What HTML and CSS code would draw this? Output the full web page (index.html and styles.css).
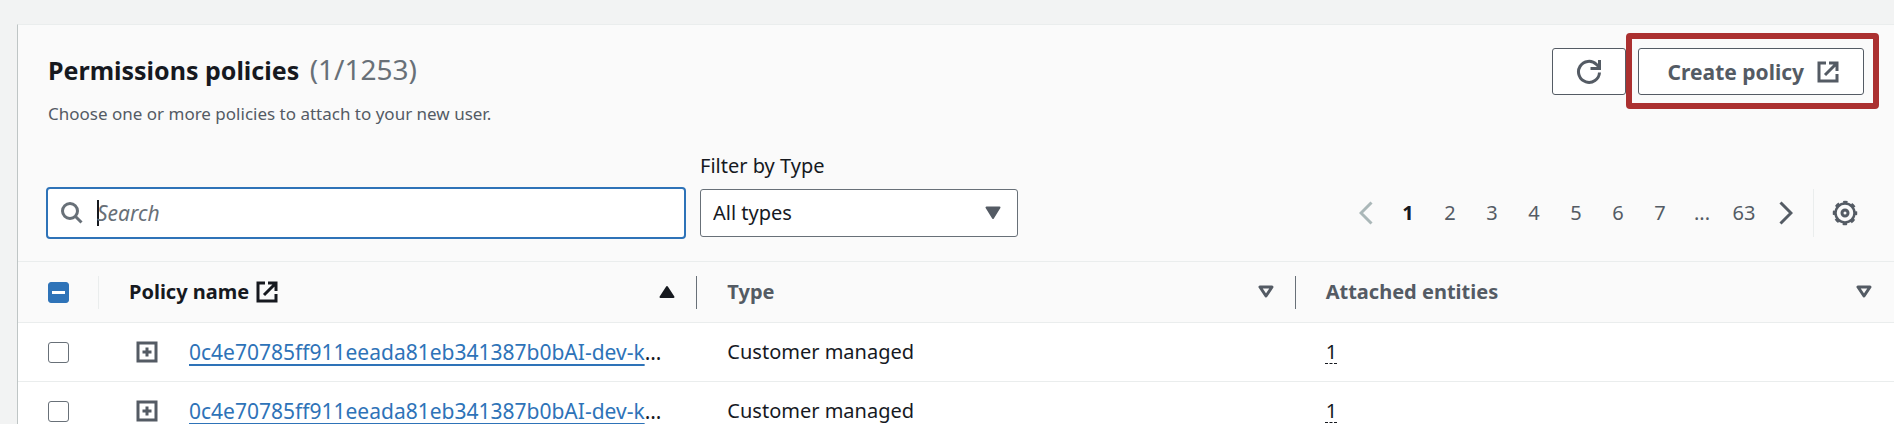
FILE: index.html
```html
<!DOCTYPE html>
<html lang="en">
<head>
<meta charset="utf-8">
<title>Permissions policies</title>
<link rel="stylesheet" href="styles.css">
</head>
<body>
<svg class="sprite" aria-hidden="true">
  <symbol id="external" viewBox="0 0 22 22"><path d="M9 2H2v18h18v-7M12 2h8v8M20 2 8 14" fill="none" stroke="currentColor" stroke-width="3"/></symbol>
  <symbol id="expand" viewBox="0 0 22 22"><path d="M2 2h18v18H2zM11 6.500v9M6.500 11h9" fill="none" stroke="currentColor" stroke-width="3"/></symbol>
  <symbol id="sort" viewBox="0 0 16 14"><path d="M2 2h12L8 11z" fill="none" stroke="currentColor" stroke-width="3" stroke-linejoin="round"/></symbol>
</svg>
<main class="panel">
  <header class="panel-header">
    <div class="heading">
      <h2 class="title">Permissions policies <span class="count">(1/1253)</span></h2>
      <p class="description">Choose one or more policies to attach to your new user.</p>
    </div>
    <div class="actions">
      <button class="button refresh" type="button" aria-label="Refresh">
        <svg class="icon-large" viewBox="0 0 26 26"><path d="M23.500 13.500A10.500 10.500 0 1 1 20.500 5.500l2 2M23.500 1v8.500h-9" fill="none" stroke="currentColor" stroke-width="3"/></svg>
      </button>
      <div class="highlight">
        <button class="button create" type="button">Create policy <svg class="icon"><use href="#external"/></svg></button>
      </div>
    </div>
  </header>
  <div class="toolbar">
    <div class="search">
      <svg class="icon" viewBox="0 0 22 22"><circle cx="9" cy="9" r="7.500" fill="none" stroke="currentColor" stroke-width="3"/><path d="m14.500 14.500 6 6" stroke="currentColor" stroke-width="3"/></svg>
      <span class="caret"></span>
      <input class="search-input" type="text" placeholder="Search" aria-label="Search">
    </div>
    <div class="filter">
      <label class="filter-label" for="type">Filter by Type</label>
      <div class="select-box">
        <select class="select" id="type"><option>All types</option></select>
        <svg class="select-arrow" viewBox="0 0 16 14"><path d="M1.500 1.500h13L8 12z" fill="currentColor" stroke="currentColor" stroke-width="2" stroke-linejoin="round"/></svg>
      </div>
    </div>
    <nav class="pagination" aria-label="Pages">
      <button class="page disabled" type="button" aria-label="Previous page" disabled><svg class="chevron" viewBox="0 0 14 24"><path d="M12.500 1.500 2 12l10.500 10.500" fill="none" stroke="currentColor" stroke-width="3"/></svg></button>
      <button class="page current" type="button" aria-current="page">1</button>
      <button class="page" type="button">2</button>
      <button class="page" type="button">3</button>
      <button class="page" type="button">4</button>
      <button class="page" type="button">5</button>
      <button class="page" type="button">6</button>
      <button class="page" type="button">7</button>
      <span class="page">...</span>
      <button class="page" type="button">63</button>
      <button class="page" type="button" aria-label="Next page"><svg class="chevron" viewBox="0 0 14 24"><path d="M1.500 1.500 12 12 1.500 22.500" fill="none" stroke="currentColor" stroke-width="3"/></svg></button>
    </nav>
    <button class="settings" type="button" aria-label="Preferences">
      <svg class="icon-large" viewBox="0 0 26 26"><g fill="none" stroke="currentColor"><circle cx="13" cy="13" r="9.500" stroke-width="2.500"/><circle cx="13" cy="13" r="11" stroke-width="2.500" stroke-dasharray="4.320 4.320" stroke-dashoffset="2.160"/><circle cx="13" cy="13" r="3" stroke-width="3"/></g></svg>
    </button>
  </div>
  <table class="table">
    <thead>
      <tr>
        <th class="select-column"><div class="head"><input class="check mixed" type="checkbox" aria-label="Select all policies"></div></th>
        <th><div class="head sorted"><span class="head-name">Policy name <svg class="icon"><use href="#external"/></svg></span><svg class="sort" viewBox="0 0 16 14"><path d="M8 2 14.500 12h-13z" fill="currentColor" stroke="currentColor" stroke-width="2" stroke-linejoin="round"/></svg></div></th>
        <th><div class="head"><span>Type</span><svg class="sort"><use href="#sort"/></svg></div></th>
        <th><div class="head"><span>Attached entities</span><svg class="sort"><use href="#sort"/></svg></div></th>
      </tr>
    </thead>
    <tbody>
      <tr>
        <td class="select-column"><input class="check" type="checkbox" aria-label="Select policy 1"></td>
        <td><div class="policy"><button class="expand" type="button" aria-label="Expand policy 1"><svg class="icon"><use href="#expand"/></svg></button><span class="name"><a class="link" href="#">0c4e70785ff911eeada81eb341387b0bAI-dev-k</a>…</span></div></td>
        <td>Customer managed</td>
        <td><span class="entities">1</span></td>
      </tr>
      <tr>
        <td class="select-column"><input class="check" type="checkbox" aria-label="Select policy 2"></td>
        <td><div class="policy"><button class="expand" type="button" aria-label="Expand policy 2"><svg class="icon"><use href="#expand"/></svg></button><span class="name"><a class="link" href="#">0c4e70785ff911eeada81eb341387b0bAI-dev-k</a>…</span></div></td>
        <td>Customer managed</td>
        <td><span class="entities">1</span></td>
      </tr>
    </tbody>
  </table>
</main>
</body>
</html>
```
FILE: styles.css
```css
* {
  box-sizing: border-box;
}

body {
  margin: 0;
  padding: 24px 0 0 17px;
  overflow: hidden;
  background: #f2f3f3;
  color: #16191f;
  font: 20px/28px "Noto Sans", "Open Sans", sans-serif;
}

button,
input,
select {
  margin: 0;
  color: inherit;
  font: inherit;
}

button {
  display: flex;
  align-items: center;
  justify-content: center;
  padding: 0;
  border: 0;
  background: none;
}

svg {
  display: block;
  flex: none;
}

.sprite {
  position: absolute;
  width: 0;
  height: 0;
}

.icon {
  width: 22px;
  height: 22px;
}

.icon-large {
  width: 26px;
  height: 26px;
}

.panel {
  border-top: 1px solid #eaeded;
  border-left: 1px solid #bfc5c5;
  background: #fafafa;
}

.panel-header {
  display: flex;
  justify-content: space-between;
  padding: 8px 15px 0 30px;
}

.heading {
  padding-top: 18px;
}

.title {
  margin: 0;
  font-size: 25px;
  line-height: 36px;
}

.count {
  margin-left: 4px;
  color: #687078;
  font-size: 28px;
  font-weight: 400;
}

.description {
  margin: 12px 0 0;
  color: #545b64;
  font-size: 17px;
  line-height: 28px;
}

.actions {
  display: flex;
  align-items: flex-start;
}

.button {
  height: 47px;
  border: 1px solid #545b64;
  border-radius: 3px;
  background: #fff;
  color: #545b64;
  font-weight: 700;
}

.refresh {
  width: 74px;
  margin-top: 15px;
}

.highlight {
  padding: 9px 9px 8px 6px;
  border: 6px solid #ab3030;
  border-radius: 4px;
}

.create {
  justify-content: flex-start;
  gap: 13px;
  padding: 0 24px 0 29px;
  font-size: 21px;
}

.toolbar {
  display: flex;
  align-items: flex-end;
  padding: 24px 30px 22px 28px;
}

.search {
  display: flex;
  align-items: center;
  width: 640px;
  height: 52px;
  padding-left: 13px;
  border: 2px solid #2e73b8;
  border-radius: 4px;
  background: #fff;
  color: #687078;
}

.caret {
  width: 2px;
  height: 26px;
  margin: 0 -2px 0 14px;
  background: #16191f;
}

.search-input {
  flex: 1;
  min-width: 0;
  padding: 0;
  border: 0;
  outline: 0;
  background: transparent;
  font-size: 21px;
}

.search-input::placeholder {
  color: #687078;
  font-style: italic;
  opacity: 1;
}

.filter {
  width: 318px;
  margin: 0 0 2px 14px;
}

.filter-label {
  display: block;
  margin-bottom: 9px;
}

.select-box {
  display: grid;
  align-items: center;
}

.select {
  grid-area: 1 / 1;
  width: 100%;
  height: 48px;
  padding: 0 12px;
  appearance: none;
  border: 1px solid #687078;
  border-radius: 3px;
  background: #fff;
}

.select-arrow {
  grid-area: 1 / 1;
  justify-self: end;
  width: 16px;
  height: 14px;
  margin-right: 17px;
  color: #545b64;
  pointer-events: none;
}

.pagination {
  display: flex;
  margin: 0 6px 2px auto;
  color: #545b64;
}

.page {
  display: flex;
  align-items: center;
  justify-content: center;
  width: 42px;
  height: 48px;
}

.current {
  color: #16191f;
  font-weight: 700;
}

.disabled {
  color: #aab7b8;
}

.chevron {
  width: 14px;
  height: 24px;
}

.settings {
  width: 51px;
  height: 48px;
  margin-bottom: 2px;
  padding-left: 12px;
  border-left: 1px solid #eaeded;
  color: #545b64;
}

.table {
  width: 100%;
  border-collapse: collapse;
  table-layout: fixed;
}

th {
  height: 61px;
  padding: 0;
  border-top: 1px solid #eaeded;
  border-bottom: 1px solid #eaeded;
  color: #545b64;
  text-align: left;
}

.head {
  display: flex;
  align-items: center;
  justify-content: space-between;
  height: 33px;
  padding: 0 21px 0 30px;
  border-right: 1px solid #687078;
}

.select-column {
  width: 81px;
}

.select-column .head {
  border-color: #eaeded;
}

th:last-child .head {
  padding-right: 22px;
  border: 0;
}

.sorted {
  color: #16191f;
}

.head-name {
  display: flex;
  align-items: center;
  gap: 7px;
}

.sort {
  width: 16px;
  height: 14px;
}

td {
  height: 59px;
  padding: 0 22px 0 30px;
  border-bottom: 1px solid #eaeded;
  background: #fff;
}

.check {
  display: block;
  flex: none;
  width: 21px;
  height: 21px;
  appearance: none;
  border: 1px solid #687078;
  border-radius: 3px;
  background: #fff;
}

.mixed {
  border-color: #2e73b8;
  background: linear-gradient(#fff, #fff) center / 13px 3px no-repeat #2e73b8;
}

.policy {
  display: flex;
  align-items: center;
  gap: 31px;
  padding-left: 7px;
}

.expand {
  color: #545b64;
}

.name {
  font-size: 21px;
  white-space: nowrap;
}

.link {
  color: #2e73b8;
  text-decoration: underline 2px;
  text-decoration-skip-ink: none;
  text-underline-offset: 4px;
}

.entities {
  text-decoration: underline dashed 1px;
  text-underline-offset: 4px;
}
```
